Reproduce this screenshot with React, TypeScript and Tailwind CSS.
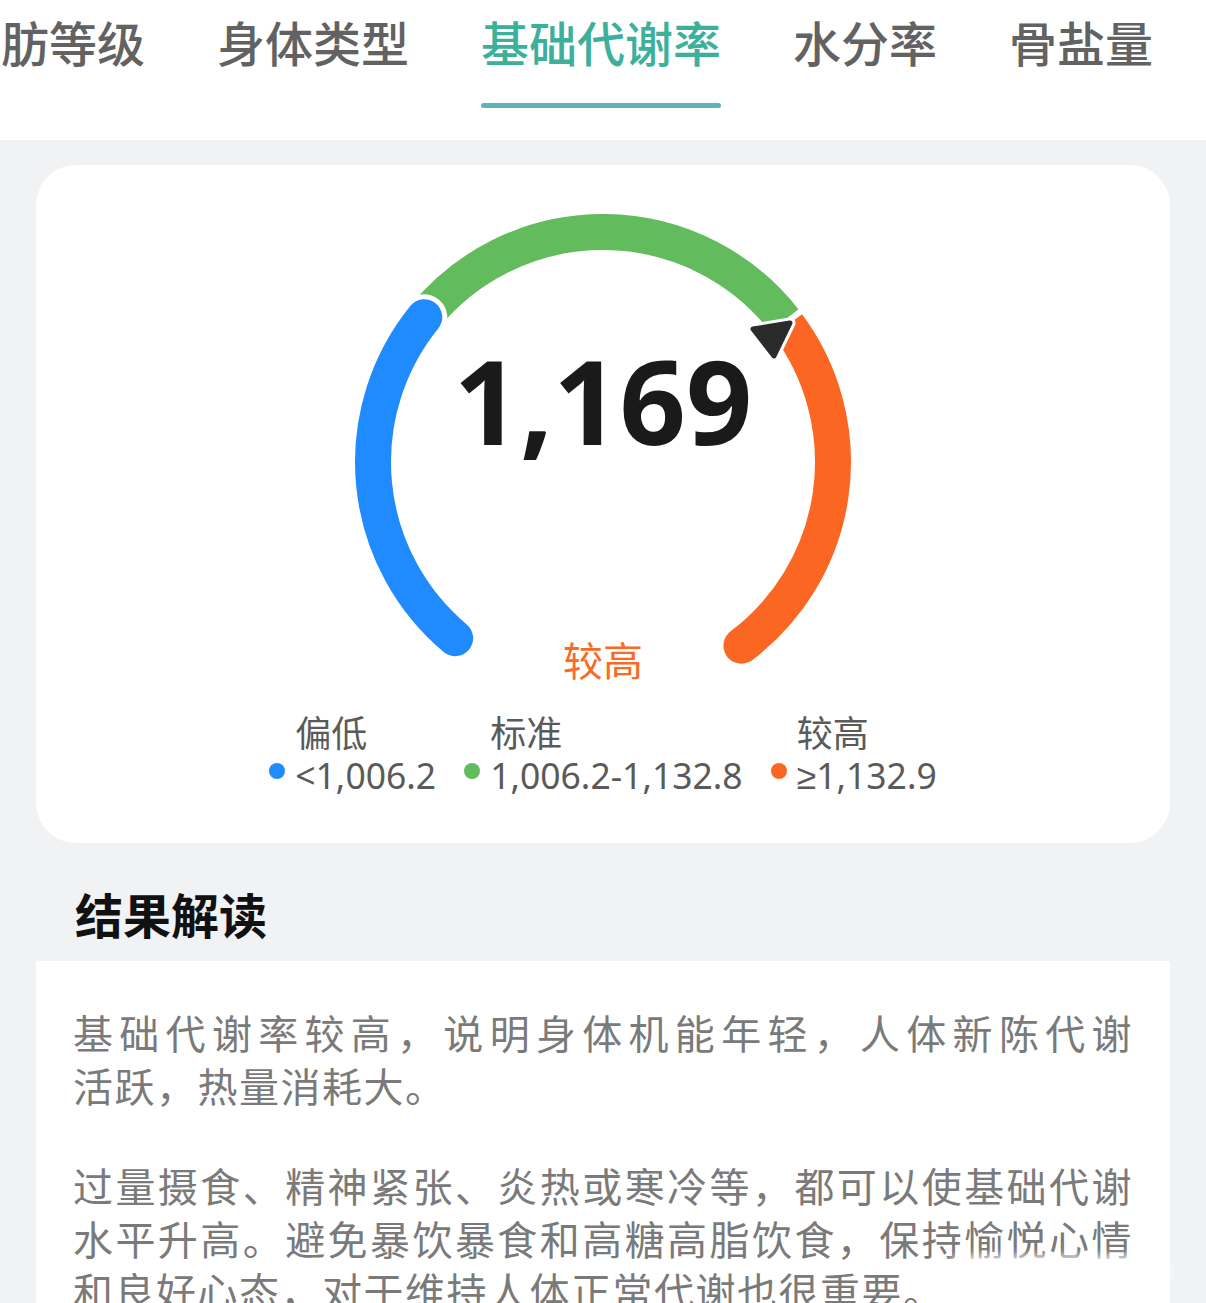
import React from 'react';

const CX = 270;
const CY = 270;
const R = 230;

function pt(deg: number) {
  const a = (deg * Math.PI) / 180;
  return [CX + R * Math.cos(a), CY + R * Math.sin(a)];
}

function arc(from: number, to: number) {
  const [x0, y0] = pt(from);
  const [x1, y1] = pt(to);
  const large = to - from > 180 ? 1 : 0;
  return `M ${x0.toFixed(2)} ${y0.toFixed(2)} A ${R} ${R} 0 ${large} 1 ${x1.toFixed(2)} ${y1.toFixed(2)}`;
}

const tabs = ['内脏脂肪等级', '身体类型', '基础代谢率', '水分率', '骨盐量'];

const legend = [
  { label: '偏低', value: '<1,006.2', dot: 'bg-[#1f8bff]' },
  { label: '标准', value: '1,006.2-1,132.8', dot: 'bg-[#62bb5c]' },
  { label: '较高', value: '≥1,132.9', dot: 'bg-[#fb6722]' },
];

function Gauge() {
  const orangeEnd = pt(413);
  return (
    <div className="relative mx-auto h-[500px] w-[540px]">
      <svg width="540" height="500" viewBox="0 0 540 500" className="block">
        <path d={arc(219, 322)} fill="none" stroke="#62bb5c" strokeWidth="36" />
        <path d={arc(323.4, 413)} fill="none" stroke="#fb6722" strokeWidth="36" />
        <circle cx={orangeEnd[0]} cy={orangeEnd[1]} r="18" fill="#fb6722" />
        <path d={arc(130, 219)} fill="none" stroke="#ffffff" strokeWidth="46" strokeLinecap="round" />
        <path d={arc(130, 219)} fill="none" stroke="#1f8bff" strokeWidth="36" strokeLinecap="round" />
        <polygon
          points="420,137 457,131 441,164"
          fill="#ffffff"
          stroke="#ffffff"
          strokeWidth="11"
          strokeLinejoin="round"
        />
        <polygon
          points="420,137 457,131 441,164"
          fill="#2b2b2b"
          stroke="#2b2b2b"
          strokeWidth="5"
          strokeLinejoin="round"
        />
      </svg>
      <div className="absolute inset-x-0 top-[150px] text-center font-['Noto_Sans',sans-serif] text-[116px] font-bold leading-none text-[#1a1a1a]">
        1,169
      </div>
      <div className="absolute inset-x-0 top-[447px] text-center text-[40px] leading-none text-[#fb6a25]">
        较高
      </div>
    </div>
  );
}

export default function App() {
  return (
    <div className="relative h-[1303px] w-[1206px] overflow-hidden bg-[#f1f2f4] font-['Noto_Sans_CJK_SC',sans-serif]">
      <div className="h-[140px] overflow-hidden bg-white">
        <div className="ml-[-143px] flex gap-[72px] pt-[17px]">
          {tabs.map((t) => {
            const active = t === '基础代谢率';
            return (
              <div key={t} className="flex shrink-0 flex-col">
                <div
                  className={
                    active
                      ? 'whitespace-nowrap text-[48px] font-medium leading-[48px] text-[#3db09b]'
                      : 'whitespace-nowrap text-[48px] font-medium leading-[48px] text-[#626262]'
                  }
                >
                  {t}
                </div>
                {active && <div className="mt-[38px] h-[5px] rounded-full bg-[#5ab5ba]" />}
              </div>
            );
          })}
        </div>
      </div>

      <div className="px-[36px] pt-[25px]">
        <div className="h-[678px] rounded-[40px] bg-white pt-[27px]">
          <Gauge />
          <div className="mt-[21px] flex justify-center gap-[28px] text-[#5a5a5a]">
            {legend.map((l) => (
              <div key={l.label} className="flex flex-col">
                <div className="pl-[26px] text-[36px] leading-[36px]">{l.label}</div>
                <div className="mt-[6px] flex items-start">
                  <span className={`mr-[10px] mt-[8px] h-[16px] w-[16px] rounded-full ${l.dot}`} />
                  <span className="font-['Noto_Sans',sans-serif] text-[35.5px] leading-[40px]">{l.value}</span>
                </div>
              </div>
            ))}
          </div>
        </div>

        <div className="ml-[39px] mt-[46px] text-[48px] font-bold leading-[48px] text-[#111111]">结果解读</div>

        <div className="mt-[24px] bg-white px-[37px] pt-[45px] pb-[40px] text-[40px] leading-[52.5px] tracking-[1.5px] text-[#7a7a7a]">
          <div>
            <div className="text-justify [text-align-last:justify]">基础代谢率较高，说明身体机能年轻，人体新陈代谢</div>
            <div>活跃，热量消耗大。</div>
          </div>
          <div className="mt-[48px]">
            <div className="text-justify [text-align-last:justify]">过量摄食、精神紧张、炎热或寒冷等，都可以使基础代谢</div>
            <div className="text-justify [text-align-last:justify]">水平升高。避免暴饮暴食和高糖高脂饮食，保持愉悦心情</div>
            <div>和良好心态，对于维持人体正常代谢也很重要。</div>
          </div>
        </div>
      </div>

      <div className="absolute left-[945px] top-[1254px] h-[36px] w-[225px] rounded-[18px] bg-white/60 blur-[3px]" />
    </div>
  );
}
